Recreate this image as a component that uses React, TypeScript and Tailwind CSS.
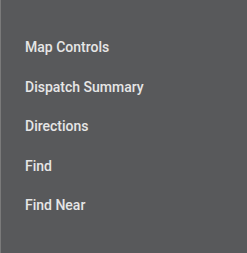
const items = ["Map Controls", "Dispatch Summary", "Directions", "Find", "Find Near"];

export default function App() {
  return (
    <div
      className="flex h-[253px] w-[247px] bg-[#58595b]"
      style={{ fontFamily: "Roboto, 'Liberation Sans', sans-serif" }}
    >
      <div className="w-px bg-[#7a7a7a]" />
      <ul className="flex-1 pt-[28px]">
        {items.map((label) => (
          <li
            key={label}
            className="flex h-[39.5px] items-center pl-[24px] text-[14px] font-medium text-[#e6e6e6]"
          >
            {label}
          </li>
        ))}
      </ul>
    </div>
  );
}
